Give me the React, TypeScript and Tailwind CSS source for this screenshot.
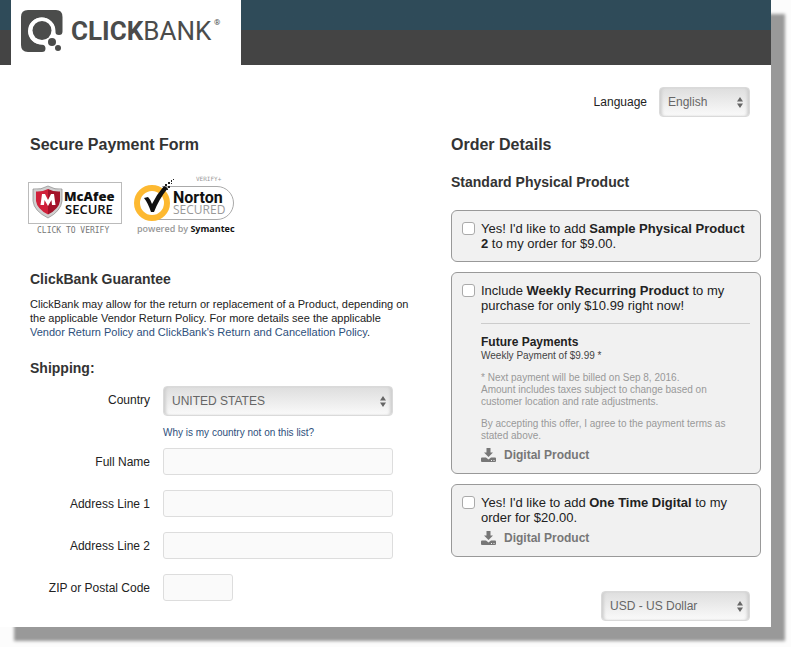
import { ReactNode } from "react";

interface SelectProps {
  id: string;
  label?: string;
  className: string;
  options: string[];
}

function Select({ id, label, className, options }: SelectProps) {
  return (
    <div className={`relative ${className}`}>
      <select
        id={id}
        aria-label={label}
        className="block h-[30px] w-full appearance-none rounded border border-[#dadada] bg-linear-to-b from-[#dedede] to-[#fafafa] pr-5 pl-2 text-xs text-[#666] shadow-[inset_3px_0_3px_-1px_#cfcfcf,inset_-3px_0_3px_-1px_#cfcfcf]"
      >
        {options.map((option) => (
          <option key={option}>{option}</option>
        ))}
      </select>
      <svg
        viewBox="0 0 6 11"
        className="pointer-events-none absolute top-[10px] right-[7px] h-[11px] w-[6px] fill-[#666]"
      >
        <path d="M3 0L6 4.5H0zM3 11L0 6.5H6z" />
      </svg>
    </div>
  );
}

function Logo() {
  return (
    <svg
      viewBox="0 0 230 65"
      className="ml-[11px] h-[65px] w-[230px] bg-white"
      role="img"
      aria-label="ClickBank"
    >
      <g fill="#4b4c4b">
        <path d="M17 10H45Q51.500 10 51.500 17V31.500Q51.500 35 48 35Q44.500 35 44 31.500A13.500 13.500 0 1 0 31 44.500Q34.500 45 34.500 48.500Q34.500 52 31 52H17Q10 52 10 45V17Q10 10 17 10Z" />
        <circle cx="31" cy="31" r="13.500" fill="#fff" />
        <circle cx="31" cy="30.500" r="9.500" />
        <circle cx="41" cy="42" r="4" />
        <circle cx="47" cy="48" r="3" />
      </g>
      <text x="60" y="40" fontFamily="Roboto, sans-serif" fontSize="26" fill="#4b4c4b">
        <tspan fontWeight="700">CLICK</tspan>
        <tspan fontWeight="400">BANK</tspan>
      </text>
      <text x="203" y="25" fontFamily="Roboto, sans-serif" fontSize="8" fill="#4b4c4b">
        ®
      </text>
    </svg>
  );
}

function McAfeeBadge() {
  return (
    <svg
      viewBox="0 0 94 62"
      className="h-[62px] w-[94px]"
      role="img"
      aria-label="McAfee Secure"
    >
      <rect x="0.500" y="7.500" width="93" height="41" fill="#fff" stroke="#bbb" />
      <path d="M5 14Q13 15 20 11Q27 15 34 14V26Q33 36 20 43Q6 36 5 26Z" fill="#d0d0d0" stroke="#888" strokeWidth="0.700" />
      <path d="M8 16.500Q14 17 20 14V39.500Q9 34 8 26Z" fill="#d0203a" />
      <path d="M32 16.500Q26 17 20 14V39.500Q31 34 32 26Z" fill="#a31229" />
      <path d="M12.500 30L14 19H17L20 25L23 19H26L27.500 30H24L23.500 25L20 31L16.500 25L16 30Z" fill="#fff" />
      <g fontFamily="Open Sans, sans-serif" fill="#111">
        <text x="36" y="26" fontSize="13" fontWeight="800">McAfee</text>
        <text x="37" y="39" fontSize="13" fontWeight="600">SECURE</text>
      </g>
      <text x="9" y="58" fontFamily="DejaVu Sans Mono, monospace" fontSize="8" fill="#777">
        CLICK TO VERIFY
      </text>
    </svg>
  );
}

function NortonBadge() {
  return (
    <svg
      viewBox="0 0 102 62"
      className="h-[62px] w-[102px]"
      role="img"
      aria-label="Norton Secured"
    >
      <path d="M28 11.500H83A16.500 16.500 0 0 1 83 44.500H24" fill="none" stroke="#aaa" />
      <circle cx="18" cy="28" r="15" fill="#fff" stroke="#fdb931" strokeWidth="6" />
      <path d="M10 23L14 22Q17 25 18 29Q23 19 30 11L34 13Q25 24 20 37H17Q14 28 10 23Z" fill="#111" />
      <path d="M31 9h2v2h-2zM34 7h2v2h-2zM34 11h2v2h-2zM37 5h1v2h-1zM37 8h1v1h-1zM32 14h2v1h-2zM39 4h1v1h-1z" fill="#222" />
      <text x="62" y="6" fontFamily="DejaVu Sans Mono, monospace" fontSize="6" fill="#999">VERIFY+</text>
      <text x="39" y="28" fontFamily="Roboto, sans-serif" fontSize="16" fontWeight="700" fill="#111">Norton</text>
      <text x="39" y="39" fontFamily="Open Sans, sans-serif" fontSize="12" fill="#999">SECURED</text>
      <text x="3" y="57" fontFamily="Open Sans, sans-serif" fontSize="9" fontWeight="600" fill="#999">
        powered by <tspan fontWeight="700" fill="#111">Symantec</tspan>
      </text>
    </svg>
  );
}

function Field({ id, label, className }: { id: string; label: string; className: string }) {
  return (
    <>
      <label htmlFor={id} className="text-right">
        {label}
      </label>
      <input
        id={id}
        type="text"
        className={`h-[27px] rounded-[3px] border border-[#ddd] bg-[#fafafa] px-2 ${className}`}
      />
    </>
  );
}

function DigitalProduct() {
  return (
    <div className="mt-[5px] flex items-center gap-2 text-xs leading-4 font-bold text-[#777]">
      <svg viewBox="0 0 15 15" className="h-[15px] w-[15px] fill-[#777]">
        <path d="M5.500 0H9.500V4.500H12L7.500 9L3 4.500H5.500Z" />
        <path
          fillRule="evenodd"
          d="M1 9.500H5L7.500 11.500L10 9.500H14Q15 9.500 15 10.500V13Q15 14 14 14H1Q0 14 0 13V10.500Q0 9.500 1 9.500ZM10 12V13H11V12ZM12.500 12V13H13.500V12Z"
        />
      </svg>
      Digital Product
    </div>
  );
}

interface OfferProps {
  id: string;
  title: ReactNode;
  children?: ReactNode;
}

function Offer({ id, title, children }: OfferProps) {
  return (
    <div className="flex gap-1.5 rounded-md border border-[#999] bg-[#f1f1f1] p-[10px]">
      <input
        id={id}
        type="checkbox"
        className="mt-px h-[13px] w-[13px] shrink-0 appearance-none rounded-[3px] border border-[#aaa] bg-white checked:bg-[#5b93d6]"
      />
      <div className="flex-1">
        <label htmlFor={id} className="block text-[13px] leading-[15px]">
          {title}
        </label>
        {children}
      </div>
    </div>
  );
}

export default function App() {
  return (
    <div className="bg-[#fcfcfc] pr-5 pb-5 font-['Liberation_Sans',Arial,sans-serif] text-xs text-[#222]">
      <div className="bg-white shadow-[14px_14px_3px_#999]">
        <header className="bg-linear-to-b from-[#2f4b59] from-[30px] to-[#444] to-[30px]">
          <Logo />
        </header>

        <main className="pt-[22px] pr-[10px] pb-1.5 pl-[30px]">
          <div className="mr-[11px] flex items-center justify-end gap-3">
            <label htmlFor="language">Language</label>
            <Select id="language" className="w-[91px]" options={["English", "Español", "Français"]} />
          </div>

          <div className="mt-4 grid grid-cols-[minmax(0,1fr)_310px] gap-[30px]">
            <section>
              <h1 className="text-base leading-6 font-bold text-[#333]">Secure Payment Form</h1>
              <div className="mt-[18px] -ml-0.5 flex gap-3">
                <McAfeeBadge />
                <NortonBadge />
              </div>

              <h2 className="mt-8 text-sm leading-5 font-bold text-[#333]">ClickBank Guarantee</h2>
              <p className="mt-2 pr-2 text-[11px] leading-[14px]">
                ClickBank may allow for the return or replacement of a Product, depending on the
                applicable Vendor Return Policy. For more details see the applicable{" "}
                <a href="#policy" className="text-[#2d4f7c]">
                  Vendor Return Policy and ClickBank's Return and Cancellation Policy
                </a>
                .
              </p>

              <h2 className="mt-[19px] text-sm leading-5 font-bold text-[#333]">Shipping:</h2>
              <form className="mt-2 grid grid-cols-[120px_minmax(0,230px)] items-center gap-x-[13px] gap-y-[15px]">
                <label htmlFor="country" className="self-start pt-1.5 text-right">
                  Country
                </label>
                <div className="-mb-1.5">
                  <Select id="country" className="w-full" options={["UNITED STATES", "CANADA"]} />
                  <a href="#countries" className="mt-[11px] block text-[10px] leading-3 text-[#2d4f7c]">
                    Why is my country not on this list?
                  </a>
                </div>
                <Field id="name" label="Full Name" className="w-full" />
                <Field id="address1" label="Address Line 1" className="w-full" />
                <Field id="address2" label="Address Line 2" className="w-full" />
                <Field id="zip" label="ZIP or Postal Code" className="w-[70px]" />
              </form>
            </section>

            <section>
              <h1 className="text-base leading-6 font-bold text-[#333]">Order Details</h1>
              <h2 className="mt-[15px] text-sm leading-5 font-bold text-[#333]">
                Standard Physical Product
              </h2>

              <div className="mt-[18px] flex flex-col gap-[10px]">
                <Offer
                  id="physical"
                  title={
                    <>
                      Yes! I'd like to add <b>Sample Physical Product 2</b> to my order for $9.00.
                    </>
                  }
                />
                <Offer
                  id="weekly"
                  title={
                    <>
                      Include <b>Weekly Recurring Product</b> to my purchase for only $10.99 right
                      now!
                    </>
                  }
                >
                  <hr className="mt-[10px] mb-[10px] border-[#ccc]" />
                  <h3 className="leading-4 font-bold">Future Payments</h3>
                  <p className="text-[10px] leading-3 text-[#444]">Weekly Payment of $9.99 *</p>
                  <div className="mt-[10px] text-[10px] leading-3 text-[#999]">
                    <p>* Next payment will be billed on Sep 8, 2016.</p>
                    <p>
                      Amount includes taxes subject to change based on customer location and rate
                      adjustments.
                    </p>
                    <p className="mt-[10px]">
                      By accepting this offer, I agree to the payment terms as stated above.
                    </p>
                  </div>
                  <DigitalProduct />
                </Offer>
                <Offer
                  id="digital"
                  title={
                    <>
                      Yes! I'd like to add <b>One Time Digital</b> to my order for $20.00.
                    </>
                  }
                >
                  <DigitalProduct />
                </Offer>
              </div>

              <div className="mt-[34px] mr-[11px] flex justify-end">
                <Select
                  id="currency"
                  label="Currency"
                  className="w-[149px]"
                  options={["USD - US Dollar", "EUR - Euro"]}
                />
              </div>
            </section>
          </div>
        </main>
      </div>
    </div>
  );
}
